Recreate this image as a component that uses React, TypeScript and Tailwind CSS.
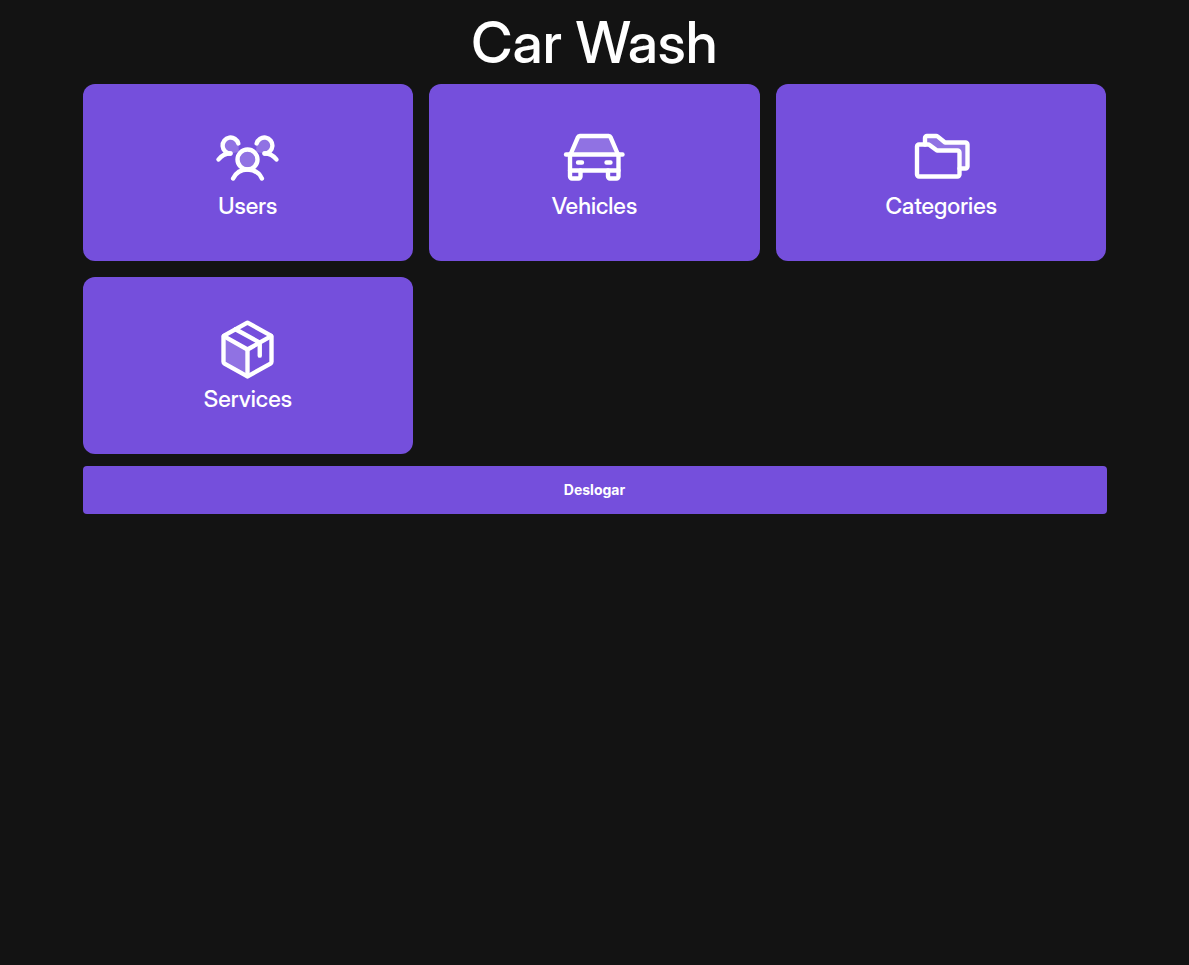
import type { ReactNode } from "react";

function Icon({ viewBox, children }: { viewBox: string; children: ReactNode }) {
  return (
    <svg
      viewBox={viewBox}
      className="size-16"
      fill="none"
      stroke="currentColor"
      strokeWidth="17.5"
      strokeLinecap="round"
      strokeLinejoin="round"
      aria-hidden="true"
    >
      {children}
    </svg>
  );
}

const tint = { fill: "currentColor", stroke: "none", opacity: 0.2 };

const UsersIcon = () => (
  <Icon viewBox="2 -2 256 256">
    <circle cx="128" cy="140" r="40" {...tint} />
    <path d="M60,116A32,32,0,1,1,91.4,78L94,110Z" {...tint} />
    <path d="M196,116A32,32,0,1,0,164.6,78L162,110Z" {...tint} />
    <circle cx="128" cy="140" r="40" />
    <path d="M196,116a59.8,59.8,0,0,1,48,24" />
    <path d="M12,140a59.8,59.8,0,0,1,48-24" />
    <path d="M70.4,216a64.1,64.1,0,0,1,115.2,0" />
    <path d="M60,116A32,32,0,1,1,91.4,76" />
    <path d="M164.6,76A32,32,0,1,1,196,116" />
  </Icon>
);

const CarIcon = () => (
  <Icon viewBox="-2 -2 256 256">
    <path d="M32,120,61.9,50.8A8,8,0,0,1,69.2,46H184.8a8,8,0,0,1,7.3,4.8L222,120Z" {...tint} />
    <path d="M14,120H240" />
    <path d="M32,120,61.9,50.8A8,8,0,0,1,69.2,46H184.8a8,8,0,0,1,7.3,4.8L222,120" />
    <path d="M224,184v24a8,8,0,0,1-8,8H190a8,8,0,0,1-8-8V184" />
    <path d="M72,184v24a8,8,0,0,1-8,8H38a8,8,0,0,1-8-8V184" />
    <path d="M30,120v64H224V120" />
    <path d="M62,152H78M176,152h16" />
  </Icon>
);

const FoldersIcon = () => (
  <Icon viewBox="0 -2 256 256">
    <path d="M64,80V54a8,8,0,0,1,8-8h37.3a8,8,0,0,1,4.8,1.6L144,72h82a8,8,0,0,1,8,8v88a8,8,0,0,1-8,8H202V112a8,8,0,0,0-8-8H112L82.1,81.6A8,8,0,0,0,77.3,80Z" {...tint} />
    <path d="M202,112v88a8,8,0,0,1-8,8H40a8,8,0,0,1-8-8V88a8,8,0,0,1,8-8H77.3a8,8,0,0,1,4.8,1.6L112,104h82A8,8,0,0,1,202,112Z" />
    <path d="M64,80V54a8,8,0,0,1,8-8h37.3a8,8,0,0,1,4.8,1.6L144,72h82a8,8,0,0,1,8,8v88a8,8,0,0,1-8,8H202" />
  </Icon>
);

const PackageIcon = () => (
  <Icon viewBox="2 -2 256 256">
    <path d="M128,234.8a7.8,7.8,0,0,1-3.9-1l-88-49.5a8.1,8.1,0,0,1-4.1-7V78.7a8,8,0,0,1,1.1-4.1L128,128Z" {...tint} />
    <path d="M224,177.3V78.7a8.1,8.1,0,0,0-4.1-7l-88-49.5a7.8,7.8,0,0,0-7.8,0l-88,49.5a8.1,8.1,0,0,0-4.1,7v98.6a8.1,8.1,0,0,0,4.1,7l88,49.5a7.8,7.8,0,0,0,7.8,0l88-49.5A8.1,8.1,0,0,0,224,177.3Z" />
    <path d="M177,152.5V100.5L80,47" />
    <path d="M222.9,74.6,128,128,33.1,74.5" />
    <path d="M128,128V234.8" />
  </Icon>
);

const items = [
  { label: "Users", href: "#users", icon: <UsersIcon /> },
  { label: "Vehicles", href: "#vehicles", icon: <CarIcon /> },
  { label: "Categories", href: "#categories", icon: <FoldersIcon /> },
  { label: "Services", href: "#services", icon: <PackageIcon /> },
];

export default function App() {
  return (
    <div className="min-h-screen bg-[#131313] px-4 font-['Inter_Display',Inter,sans-serif] text-white">
      <main className="mx-auto flex max-w-5xl flex-col gap-3 pt-[14px]">
        <h1 className="text-center text-[57px] leading-[58px] font-medium">Car Wash</h1>
        <nav className="grid grid-cols-3 gap-4">
          {items.map((item) => (
            <a
              key={item.label}
              href={item.href}
              className="flex flex-col items-center rounded-xl bg-[#754fdc] pt-10 pb-[37px]"
            >
              {item.icon}
              <span className="text-[23px] leading-9 font-medium">{item.label}</span>
            </a>
          ))}
        </nav>
        <button type="button" className="h-12 rounded-sm bg-[#754fdc] font-[Inter,sans-serif] text-sm font-bold">
          Deslogar
        </button>
      </main>
    </div>
  );
}
